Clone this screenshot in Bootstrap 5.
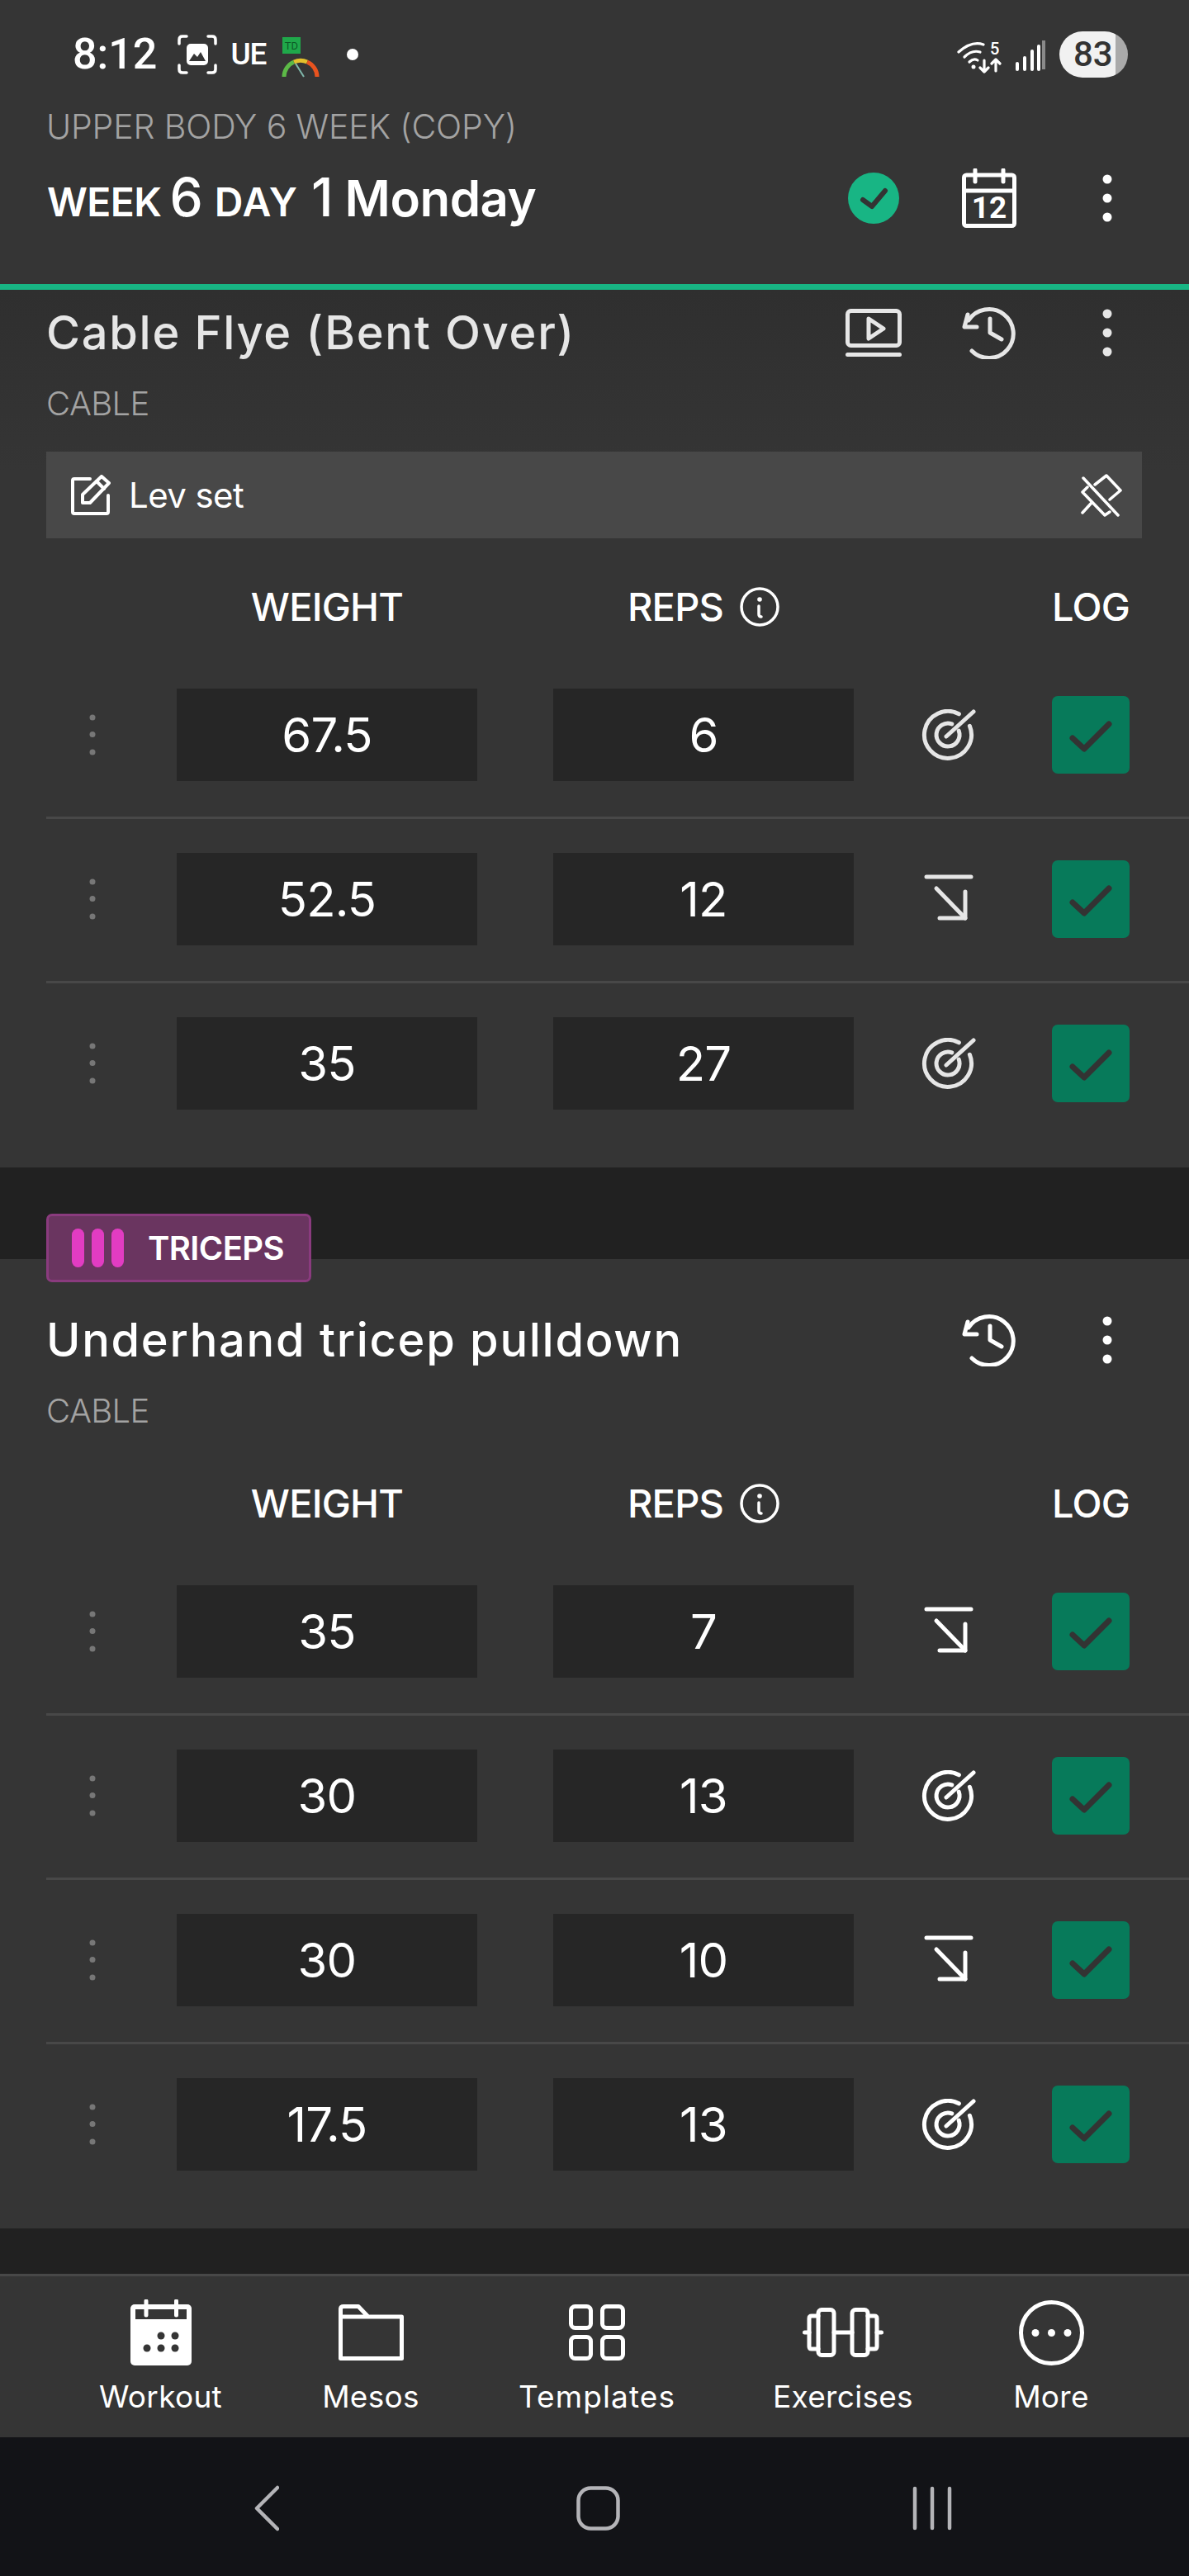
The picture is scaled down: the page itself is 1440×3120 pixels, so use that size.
<!DOCTYPE html>
<html lang="en">
<head>
  <meta charset="UTF-8" />
  <meta name="viewport" content="width=device-width, initial-scale=1" />
  <title>Workout</title>
  <link href="https://cdn.jsdelivr.net/npm/bootstrap@5.3.2/dist/css/bootstrap.min.css" rel="stylesheet" />
  <style>
    body { background: #212121; color: #fff; font-family: Inter, "Liberation Sans", sans-serif; }
    .app-shell { width: 1440px; height: 3120px; overflow: hidden; }
    .app-shell > * { flex: none; }
    svg { display: block; flex: none; }
    .line-ico { fill: none; stroke: currentColor; stroke-linecap: round; stroke-linejoin: round; }

    /* top header */
    .top-head { height: 351px; background: #353535; border-bottom: 7px solid #18b584; }
    .status-row { height: 131px; padding: 0 74px 0 88px; font-family: Roboto, sans-serif; }
    .status-time { font-size: 52px; font-weight: 500; line-height: 1; margin-right: 25px; }
    .status-ue { font-size: 37px; font-weight: 500; margin: 0 18px 0 16px; letter-spacing: -1px; }
    .status-gauge { margin-top: 9px; }
    .status-dot { width: 14px; height: 14px; border-radius: 50%; background: #fff; margin-left: 33px; }
    .batt { width: 83px; height: 56px; border-radius: 28px; margin-left: 17px; color: #333; font-size: 42px; font-weight: 500; padding-left: 17px; line-height: 56px; background: linear-gradient(90deg, #f1f1f1 82%, #aaa 82%); }
    .plan-name { font-size: 41px; font-weight: 300; line-height: 44px; color: #a3a3a3; padding-left: 56px; letter-spacing: -.15px; }
    .week-row { height: 96px; margin-top: 17px; padding: 0 26px 0 57px; }
    .week-text { margin-top: -3px; }
    .week-sm { font-size: 48px; font-weight: 600; letter-spacing: -.6px; }
    .week-sm-day { letter-spacing: 1px; margin-right: 6px; }
    .week-lg { font-size: 64px; font-weight: 500; margin: 0 14px 0 10px; }
    .week-day { font-size: 60px; font-weight: 600; letter-spacing: -.5px; }
    .slot-a { width: 140px; }
    .slot-b { width: 146px; }

    /* exercise cards */
    .ex-card { background: #353535; }
    .ex-scrolled { background: linear-gradient(180deg, #2f2f2f, #353535 220px); color: #e6e6e6; }
    .ex-head { padding: 60px 26px 1px 56px; }
    .ex-scrolled .ex-head { padding-top: 14px; }
    .ex-title { font-size: 56px; font-weight: 500; line-height: 76px; letter-spacing: 1.7px; white-space: nowrap; }
    .ex-kind { font-size: 40px; font-weight: 300; line-height: 56px; margin-top: 20px; color: #a3a3a3; letter-spacing: -.6px; }
    .note-bar { height: 105px; margin: 29px 57px 0 56px; padding: 0 24px 0 29px; background: #484848; color: #fff; }
    .note-text { font-size: 42px; margin-left: 22px; letter-spacing: -.6px; }

    .set-grid { display: flex; align-items: center; padding-left: 56px; }
    .cell-drag { width: 112px; margin-right: 46px; }
    .cell-val { width: 364px; }
    .cell-gap { width: 92px; }
    .cell-goal { width: 230px; }
    .cell-log { width: 94px; margin-left: 10px; }
    .set-head { height: 141px; padding-top: 25px; color: #fff; font-size: 47px; font-weight: 500; letter-spacing: -.8px; }
    .info-ico { margin-left: 20px; }
    .set-row { height: 196px; padding-top: 41px; padding-bottom: 43px; align-items: flex-start; }
    .set-row > div { height: 112px; }
    .set-sep { height: 3px; background: #484848; margin-left: 56px; }
    .set-last { height: 223px; }
    .val-box { background: #262626; font-size: 58px; color: #fff; letter-spacing: -.8px; }
    .log-box { width: 94px; height: 94px; background: #077a5a; border-radius: 7px; color: #333; }
    .drag-ico { color: #777; }

    .gap-band { height: 111px; padding: 56px 0 0 56px; position: relative; z-index: 1; }
    .gap-end { height: 55px; }
    .muscle-tag { width: 321px; height: 83px; background: #6a3560; border: 3px solid #8a3b7e; border-radius: 7px; padding-left: 28px; }
    .muscle-bar { width: 15px; height: 47px; border-radius: 8px; background: #e23cc2; margin-right: 9px; }
    .muscle-text { font-size: 40px; font-weight: 600; margin-left: 29px; letter-spacing: -.6px; }

    /* bottom */
    .tab-bar { height: 198px; background: #353535; border-top: 3px solid #484848; padding-left: 118px; display: grid; grid-template-columns: 153px 116px 192px 164px 100px; column-gap: 120px; }
    .tab-item { padding-top: 27px; display: flex; flex-direction: column; align-items: center; font-size: 37px; line-height: 40px; letter-spacing: .3px; white-space: nowrap; }
    .tab-wide { letter-spacing: 1.1px; }
    .tab-ico { height: 82px; margin-bottom: 17px; flex: none; }
    .sys-nav { height: 168px; background: #121317; color: #b4b4b8; padding-left: 308px; padding-top: 3px; }
    .sys-home { margin-left: 360px; }
    .sys-recent { margin-left: 354px; }
  </style>
</head>
<body>
  <!-- shared icons -->
  <svg class="d-none">
    <symbol id="i-kebab" viewBox="0 0 12 58"><circle cx="6" cy="6" r="5.5" fill="currentColor"/><circle cx="6" cy="29" r="5.5" fill="currentColor"/><circle cx="6" cy="52" r="5.5" fill="currentColor"/></symbol>
    <symbol id="i-history" viewBox="0 0 66 64"><g class="line-ico" stroke-width="5"><path d="M12 54A29.5 29.5 0 1 0 8 17"/><path d="M7 10 3 25H18"/><path d="M34 15V32L48 40"/></g></symbol>
    <symbol id="i-goal" viewBox="0 0 66 62"><g class="line-ico" stroke-width="5"><path d="M45.4 5.8A28.5 28.5 0 1 0 58.4 20.3"/><path d="M36.8 17.8A14 14 0 1 0 45.2 26.2"/><path d="M30 33 63 3"/></g></symbol>
    <symbol id="i-drop" viewBox="0 0 60 60"><g class="line-ico" stroke-width="5"><path d="M3 3H57"/><path d="M15 17 50 53"/><path d="M50 21V53H19"/></g></symbol>
    <symbol id="i-check" viewBox="0 0 52 42"><path class="line-ico" stroke-width="7" d="M4 25 18 38 48 8"/></symbol>
    <symbol id="i-drag" viewBox="0 0 8 50"><circle cx="4" cy="4" r="3.5" fill="currentColor"/><circle cx="4" cy="24.5" r="3.5" fill="currentColor"/><circle cx="4" cy="46" r="3.5" fill="currentColor"/></symbol>
    <symbol id="i-info" viewBox="0 0 48 48"><circle class="line-ico" stroke-width="3.5" cx="24" cy="24" r="22"/><circle cx="24" cy="15" r="2.8" fill="currentColor"/><path class="line-ico" stroke-width="3.5" d="M23 23V33Q23 36 26 36"/></symbol>
  </svg>

  <div class="app-shell d-flex flex-column">
    <header class="top-head">
      <div class="status-row d-flex align-items-center">
        <span class="status-time">8:12</span>
        <svg width="48" height="48" viewBox="0 0 48 48">
          <g class="line-ico" stroke-width="3.5"><path d="M2 11V6Q2 2 6 2H11"/><path d="M37 2H42Q46 2 46 6V11"/><path d="M46 37V42Q46 46 42 46H37"/><path d="M11 46H6Q2 46 2 42V37"/></g>
          <rect x="11" y="11" width="26" height="26" rx="5" fill="#fff"/>
          <path d="M14 32 20 23 24 27 28 21 34 32Z" fill="#353535"/>
        </svg>
        <span class="status-ue">UE</span>
        <svg class="status-gauge" width="46" height="50" viewBox="0 0 46 50">
          <rect x="1" y="0" width="22" height="20" fill="#1fa84a"/>
          <text x="12" y="15" text-anchor="middle" font-family="Roboto, sans-serif" font-size="13" fill="#0c5a26">TD</text>
          <path d="M3 48A20 20 0 0 1 15 30" fill="none" stroke="#5cb947" stroke-width="5"/>
          <path d="M15 30A20 20 0 0 1 31 30" fill="none" stroke="#e3c12c" stroke-width="5"/>
          <path d="M31 30A20 20 0 0 1 43 48" fill="none" stroke="#e8531f" stroke-width="5"/>
          <path d="M17 32 27 48" stroke="#7fb6aa" stroke-width="2"/>
        </svg>
        <span class="status-dot"></span>
        <div class="ms-auto d-flex align-items-center">
          <svg width="54" height="46" viewBox="0 -6 54 46">
            <g class="line-ico" stroke-width="3.2"><path d="M2 14Q18 0 32 5"/><path d="M9 20Q18 11 28 14"/><path d="M15 26Q20 21 25 24"/><path d="M33 24V38M28 33 33 38 38 33"/><path d="M47 37V23M42 28 47 23 52 28"/></g>
            <circle cx="20" cy="32" r="2.5" fill="#fff"/>
            <text x="40" y="17" font-family="Roboto, sans-serif" font-size="20" font-weight="500" fill="#fff">5</text>
          </svg>
          <svg class="ms-3" width="37" height="40" viewBox="0 0 37 40">
            <g class="line-ico" stroke-width="4"><path d="M3 38V31"/><path d="M12 38V24"/><path d="M21 38V16"/><path d="M29 38V10"/></g>
            <path d="M35 38V3" stroke="#8a8a8a" stroke-width="4"/>
          </svg>
          <div class="batt">83</div>
        </div>
      </div>
      <div class="plan-name">UPPER BODY 6 WEEK (COPY)</div>
      <div class="week-row d-flex align-items-center">
        <div class="week-text d-flex align-items-baseline">
          <span class="week-sm">WEEK</span><span class="week-lg">6</span><span class="week-sm week-sm-day">DAY</span><span class="week-lg">1</span><span class="week-day">Monday</span>
        </div>
        <div class="ms-auto d-flex align-items-center">
          <div class="slot-a d-flex justify-content-center">
            <svg width="62" height="62" viewBox="0 0 62 62"><circle cx="31" cy="31" r="31" fill="#18b584"/><path fill="none" stroke="#333" stroke-linecap="round" stroke-linejoin="round" stroke-width="6" d="M18 33 29 41 45 22"/></svg>
          </div>
          <div class="slot-a d-flex justify-content-center">
            <svg width="66" height="72" viewBox="0 0 66 72">
              <g class="line-ico" stroke-width="5"><rect x="2.5" y="8" width="61" height="61.5" rx="3"/><path d="M2.5 27H63.5"/><path d="M16 2V16"/><path d="M50 2V16"/></g>
              <text x="33" y="60" text-anchor="middle" font-family="Roboto, sans-serif" font-size="37" font-weight="700" fill="#fff">12</text>
            </svg>
          </div>
          <div class="slot-b d-flex justify-content-center"><svg width="12" height="58"><use href="#i-kebab"/></svg></div>
        </div>
      </div>
    </header>

    <!-- first exercise, partly under the header -->
    <section class="ex-card ex-scrolled">
      <div class="ex-head">
        <div class="d-flex align-items-center">
          <div class="ex-title flex-grow-1">Cable Flye (Bent Over)</div>
          <div class="slot-a d-flex justify-content-center">
            <svg width="68" height="58" viewBox="0 0 68 58"><g class="line-ico" stroke-width="5"><rect x="2.5" y="2.5" width="63" height="42" rx="4"/><path d="M2.5 55.5H65.5"/><path d="M28 12 46 24 28 36Z"/></g></svg>
          </div>
          <div class="slot-a d-flex justify-content-center"><svg width="66" height="64"><use href="#i-history"/></svg></div>
          <div class="slot-b d-flex justify-content-center"><svg width="12" height="58"><use href="#i-kebab"/></svg></div>
        </div>
        <div class="ex-kind">CABLE</div>
      </div>
      <div class="note-bar d-flex align-items-center">
        <svg width="49" height="49" viewBox="0 0 49 49"><g class="line-ico" stroke-width="4"><path d="M24 5H5Q3 5 3 7V45Q3 47 5 47H44Q46 47 46 45V25"/><path d="M15 34V24L38 2 47 10 24 34Z"/><path d="M32 8 41 17"/></g></svg>
        <span class="note-text">Lev set</span>
        <svg class="ms-auto" width="50" height="52" viewBox="0 0 50 52"><g class="line-ico" stroke-width="3.5"><path d="M3 5 45 50"/><path d="M17 13 31 2 48 20 35 31"/><path d="M8 16 2 22 29 50 35 46"/><path d="M2 47 13 35"/></g></svg>
      </div>
      <div class="set-grid set-head">
        <div class="cell-drag"></div>
        <div class="cell-val text-center">WEIGHT</div>
        <div class="cell-gap"></div>
        <div class="cell-val d-flex justify-content-center align-items-center">REPS<svg class="info-ico" width="48" height="48"><use href="#i-info"/></svg></div>
        <div class="cell-goal"></div>
        <div class="cell-log text-center">LOG</div>
      </div>

      <div class="set-grid set-row">
        <div class="cell-drag d-flex align-items-center justify-content-center drag-ico"><svg width="8" height="50"><use href="#i-drag"/></svg></div>
        <div class="cell-val val-box d-flex align-items-center justify-content-center">67.5</div>
        <div class="cell-gap"></div>
        <div class="cell-val val-box d-flex align-items-center justify-content-center">6</div>
        <div class="cell-goal d-flex align-items-center justify-content-center"><svg width="66" height="62"><use href="#i-goal"/></svg></div>
        <div class="cell-log d-flex align-items-center"><div class="log-box d-flex align-items-center justify-content-center"><svg width="52" height="42"><use href="#i-check"/></svg></div></div>
      </div>
      <div class="set-sep"></div>
      <div class="set-grid set-row">
        <div class="cell-drag d-flex align-items-center justify-content-center drag-ico"><svg width="8" height="50"><use href="#i-drag"/></svg></div>
        <div class="cell-val val-box d-flex align-items-center justify-content-center">52.5</div>
        <div class="cell-gap"></div>
        <div class="cell-val val-box d-flex align-items-center justify-content-center">12</div>
        <div class="cell-goal d-flex align-items-center justify-content-center"><svg width="60" height="60"><use href="#i-drop"/></svg></div>
        <div class="cell-log d-flex align-items-center"><div class="log-box d-flex align-items-center justify-content-center"><svg width="52" height="42"><use href="#i-check"/></svg></div></div>
      </div>
      <div class="set-sep"></div>
      <div class="set-grid set-row set-last">
        <div class="cell-drag d-flex align-items-center justify-content-center drag-ico"><svg width="8" height="50"><use href="#i-drag"/></svg></div>
        <div class="cell-val val-box d-flex align-items-center justify-content-center">35</div>
        <div class="cell-gap"></div>
        <div class="cell-val val-box d-flex align-items-center justify-content-center">27</div>
        <div class="cell-goal d-flex align-items-center justify-content-center"><svg width="66" height="62"><use href="#i-goal"/></svg></div>
        <div class="cell-log d-flex align-items-center"><div class="log-box d-flex align-items-center justify-content-center"><svg width="52" height="42"><use href="#i-check"/></svg></div></div>
      </div>
    </section>

    <div class="gap-band">
      <div class="muscle-tag d-flex align-items-center">
        <span class="muscle-bar"></span><span class="muscle-bar"></span><span class="muscle-bar me-0"></span>
        <span class="muscle-text">TRICEPS</span>
      </div>
    </div>

    <!-- second exercise -->
    <section class="ex-card">
      <div class="ex-head">
        <div class="d-flex align-items-center">
          <div class="ex-title flex-grow-1">Underhand tricep pulldown</div>
          <div class="slot-a d-flex justify-content-center"><svg width="66" height="64"><use href="#i-history"/></svg></div>
          <div class="slot-b d-flex justify-content-center"><svg width="12" height="58"><use href="#i-kebab"/></svg></div>
        </div>
        <div class="ex-kind">CABLE</div>
      </div>
      <div class="set-grid set-head">
        <div class="cell-drag"></div>
        <div class="cell-val text-center">WEIGHT</div>
        <div class="cell-gap"></div>
        <div class="cell-val d-flex justify-content-center align-items-center">REPS<svg class="info-ico" width="48" height="48"><use href="#i-info"/></svg></div>
        <div class="cell-goal"></div>
        <div class="cell-log text-center">LOG</div>
      </div>

      <div class="set-grid set-row">
        <div class="cell-drag d-flex align-items-center justify-content-center drag-ico"><svg width="8" height="50"><use href="#i-drag"/></svg></div>
        <div class="cell-val val-box d-flex align-items-center justify-content-center">35</div>
        <div class="cell-gap"></div>
        <div class="cell-val val-box d-flex align-items-center justify-content-center">7</div>
        <div class="cell-goal d-flex align-items-center justify-content-center"><svg width="60" height="60"><use href="#i-drop"/></svg></div>
        <div class="cell-log d-flex align-items-center"><div class="log-box d-flex align-items-center justify-content-center"><svg width="52" height="42"><use href="#i-check"/></svg></div></div>
      </div>
      <div class="set-sep"></div>
      <div class="set-grid set-row">
        <div class="cell-drag d-flex align-items-center justify-content-center drag-ico"><svg width="8" height="50"><use href="#i-drag"/></svg></div>
        <div class="cell-val val-box d-flex align-items-center justify-content-center">30</div>
        <div class="cell-gap"></div>
        <div class="cell-val val-box d-flex align-items-center justify-content-center">13</div>
        <div class="cell-goal d-flex align-items-center justify-content-center"><svg width="66" height="62"><use href="#i-goal"/></svg></div>
        <div class="cell-log d-flex align-items-center"><div class="log-box d-flex align-items-center justify-content-center"><svg width="52" height="42"><use href="#i-check"/></svg></div></div>
      </div>
      <div class="set-sep"></div>
      <div class="set-grid set-row">
        <div class="cell-drag d-flex align-items-center justify-content-center drag-ico"><svg width="8" height="50"><use href="#i-drag"/></svg></div>
        <div class="cell-val val-box d-flex align-items-center justify-content-center">30</div>
        <div class="cell-gap"></div>
        <div class="cell-val val-box d-flex align-items-center justify-content-center">10</div>
        <div class="cell-goal d-flex align-items-center justify-content-center"><svg width="60" height="60"><use href="#i-drop"/></svg></div>
        <div class="cell-log d-flex align-items-center"><div class="log-box d-flex align-items-center justify-content-center"><svg width="52" height="42"><use href="#i-check"/></svg></div></div>
      </div>
      <div class="set-sep"></div>
      <div class="set-grid set-row set-last">
        <div class="cell-drag d-flex align-items-center justify-content-center drag-ico"><svg width="8" height="50"><use href="#i-drag"/></svg></div>
        <div class="cell-val val-box d-flex align-items-center justify-content-center">17.5</div>
        <div class="cell-gap"></div>
        <div class="cell-val val-box d-flex align-items-center justify-content-center">13</div>
        <div class="cell-goal d-flex align-items-center justify-content-center"><svg width="66" height="62"><use href="#i-goal"/></svg></div>
        <div class="cell-log d-flex align-items-center"><div class="log-box d-flex align-items-center justify-content-center"><svg width="52" height="42"><use href="#i-check"/></svg></div></div>
      </div>
    </section>

    <div class="gap-end"></div>

    <nav class="tab-bar">
      <div class="tab-item">
        <div class="tab-ico d-flex align-items-center">
          <svg width="74" height="80" viewBox="0 0 74 80">
            <rect x="0" y="6" width="74" height="74" rx="5" fill="#fff"/>
            <rect x="6" y="12" width="62" height="12" fill="#353535"/>
            <path d="M19 2V19M55.5 2V19" stroke="#fff" stroke-width="5" stroke-linecap="round"/>
            <g fill="#353535"><circle cx="37" cy="44" r="4.5"/><circle cx="54" cy="44" r="4.5"/><circle cx="20" cy="59" r="4.5"/><circle cx="37" cy="59" r="4.5"/><circle cx="54" cy="59" r="4.5"/></g>
          </svg>
        </div>
        Workout
      </div>
      <div class="tab-item">
        <div class="tab-ico d-flex align-items-center">
          <svg width="79" height="68" viewBox="0 0 79 68"><path class="line-ico" stroke-width="5" d="M2.5 6Q2.5 2.5 6 2.5H24L36 15H76.5V65.5H2.5ZM2.5 15H36"/></svg>
        </div>
        Mesos
      </div>
      <div class="tab-item tab-wide">
        <div class="tab-ico d-flex align-items-center">
          <svg width="68" height="68" viewBox="0 0 68 68"><g class="line-ico" stroke-width="5"><rect x="2.5" y="2.5" width="24" height="26" rx="5"/><rect x="40.5" y="2.5" width="25" height="26" rx="5"/><rect x="2.5" y="39.5" width="24" height="26" rx="5"/><rect x="40.5" y="39.5" width="25" height="26" rx="5"/></g></svg>
        </div>
        Templates
      </div>
      <div class="tab-item">
        <div class="tab-ico d-flex align-items-center">
          <svg width="98" height="60" viewBox="0 0 98 60"><g class="line-ico" stroke-width="5"><rect x="19" y="2.5" width="19" height="55" rx="4"/><rect x="60" y="2.5" width="19" height="55" rx="4"/><path d="M19 10H11Q8 10 8 13V47Q8 50 11 50H19"/><path d="M79 10H87Q90 10 90 13V47Q90 50 87 50H79"/><path d="M38 30H60"/><path d="M2.5 30H8M90 30H95.5"/></g></svg>
        </div>
        Exercises
      </div>
      <div class="tab-item">
        <div class="tab-ico d-flex align-items-center">
          <svg width="79" height="79" viewBox="0 0 79 79"><circle class="line-ico" stroke-width="5" cx="39.5" cy="39.5" r="37"/><g fill="#fff"><circle cx="20" cy="39.5" r="4.5"/><circle cx="39.5" cy="39.5" r="4.5"/><circle cx="59" cy="39.5" r="4.5"/></g></svg>
        </div>
        More
      </div>
    </nav>

    <div class="sys-nav d-flex align-items-center">
      <svg width="30" height="56" viewBox="0 0 30 56"><path class="line-ico" stroke-width="4.5" d="M28 3 3 28 28 53"/></svg>
      <svg class="sys-home" width="53" height="54" viewBox="0 0 53 54"><rect class="line-ico" stroke-width="4.5" x="2.5" y="2.5" width="48" height="49" rx="15"/></svg>
      <svg class="sys-recent" width="48" height="54" viewBox="0 0 48 54"><g class="line-ico" stroke-width="4.5"><path d="M3 3V51"/><path d="M24 3V51"/><path d="M45 3V51"/></g></svg>
    </div>
  </div>
</body>
</html>
